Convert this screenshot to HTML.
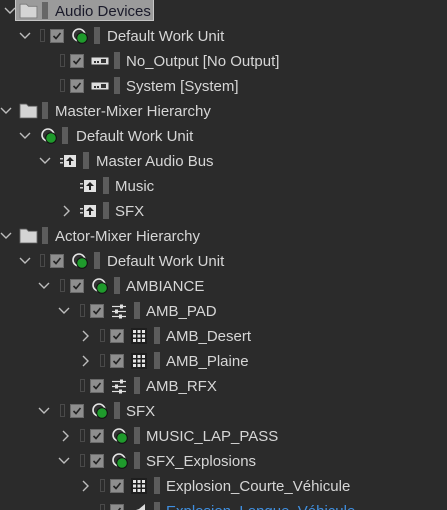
<!DOCTYPE html>
<html style="height:510px;overflow:hidden"><head><meta charset="utf-8"><style>
body{margin:0;width:447px;height:510px;background:#2b2b2b;overflow:hidden;position:relative;font-family:"Liberation Sans",sans-serif;font-size:15px;color:#d6d6d6}
.r{position:absolute;left:0;width:447px;height:25px}
.r>*{position:absolute}
.t{top:5px;line-height:18px;white-space:nowrap}
.bar{top:4px;width:6px;height:17px;background:#5c5c5c}
.grip{top:6px;width:3px;height:11px;border:1px solid #4a4a4a}
.cb{top:6px;width:12px;height:12px;background:#8e8e8e;border:1px solid #6a6a6a}
svg{position:absolute}
</style></head><body>
<svg width="0" height="0" style="position:absolute"><defs>
<symbol id="dn" viewBox="0 0 12 8"><polyline points="1,1 6,6 11,1" fill="none" stroke="#bdbdbd" stroke-width="1.4"/></symbol>
<symbol id="rt" viewBox="0 0 8 12"><polyline points="1,1 6,6 1,11" fill="none" stroke="#bdbdbd" stroke-width="1.4"/></symbol>
<symbol id="ck" viewBox="0 0 12 12"><polyline points="2.5,6 5,8.5 9.5,3" fill="none" stroke="#222" stroke-width="1.6"/></symbol>
<symbol id="fold" viewBox="0 0 18 16"><path d="M1 2h6l2 2h8v11H1z" fill="#d4d4d4" stroke="#777" stroke-width=".8"/></symbol>
<symbol id="wu" viewBox="0 0 16 16"><circle cx="7" cy="7" r="6" fill="#333" stroke="#e4e4e4" stroke-width="1.6"/><circle cx="10" cy="10" r="5.3" fill="#1f9a2c" stroke="#111" stroke-width="1"/></symbol>
<symbol id="dev" viewBox="0 0 18 10"><rect x="0.5" y="1.5" width="17" height="7" fill="#ddd"/><rect x="3" y="5" width="2" height="2" fill="#333"/><rect x="6" y="5" width="2" height="2" fill="#333"/><rect x="10" y="3" width="5" height="4" fill="#333"/></symbol>
<symbol id="bus" viewBox="0 0 18 16"><rect x="5" y="2" width="12" height="12" fill="#e2e2e2"/><path d="M11 4l-4 4h3v4h2V8h3z" fill="#222"/><rect x="1" y="5" width="3" height="1.5" fill="#ccc"/><rect x="1" y="9" width="3" height="1.5" fill="#ccc"/></symbol>
<symbol id="sl" viewBox="0 0 16 16"><g stroke="#e0e0e0" stroke-width="1.2"><line x1="1" y1="3.5" x2="15" y2="3.5"/><line x1="1" y1="8.5" x2="15" y2="8.5"/><line x1="1" y1="13.5" x2="15" y2="13.5"/></g><rect x="9" y="1.5" width="3" height="4" fill="#e0e0e0"/><rect x="4" y="6.5" width="3" height="4" fill="#e0e0e0"/><rect x="8" y="11.5" width="3" height="4" fill="#e0e0e0"/></symbol>
<symbol id="grid" viewBox="0 0 16 16"><rect width="16" height="16" fill="#1e1e1e"/><g fill="#e4e4e4"><rect x="2" y="2" width="3" height="3"/><rect x="6.5" y="2" width="3" height="3"/><rect x="11" y="2" width="3" height="3"/><rect x="2" y="6.5" width="3" height="3"/><rect x="6.5" y="6.5" width="3" height="3"/><rect x="11" y="6.5" width="3" height="3"/><rect x="2" y="11" width="3" height="3"/><rect x="6.5" y="11" width="3" height="3"/><rect x="11" y="11" width="3" height="3"/></g></symbol>
</defs></svg>

<div class="r" style="top:-2px">
<div style="left:15px;top:1px;width:139px;height:22px;background:#9b9b9b;border:1px solid #c6c6c6;box-sizing:border-box"></div>
<svg style="left:4px;top:9px" width="12" height="8"><use href="#dn"/></svg>
<svg style="left:19px;top:4px" width="19" height="17"><use href="#fold"/></svg>
<div class="bar" style="left:42px;background:#666"></div>
<div class="t" style="left:55px;color:#1a1a2a">Audio Devices</div></div>

<div class="r" style="top:23px">
<svg style="left:19px;top:9px" width="12" height="8"><use href="#dn"/></svg>
<div class="grip" style="left:40px"></div><div class="cb" style="left:50px"><svg width="12" height="12"><use href="#ck"/></svg></div>
<svg style="left:72px;top:5px" width="16" height="16"><use href="#wu"/></svg>
<div class="bar" style="left:94px"></div><div class="t" style="left:107px">Default Work Unit</div></div>

<div class="r" style="top:48px">
<div class="grip" style="left:60px"></div><div class="cb" style="left:70px"><svg width="12" height="12"><use href="#ck"/></svg></div>
<svg style="left:91px;top:8px" width="18" height="10"><use href="#dev"/></svg>
<div class="bar" style="left:114px"></div><div class="t" style="left:126px">No_Output [No Output]</div></div>

<div class="r" style="top:73px">
<div class="grip" style="left:60px"></div><div class="cb" style="left:70px"><svg width="12" height="12"><use href="#ck"/></svg></div>
<svg style="left:91px;top:8px" width="18" height="10"><use href="#dev"/></svg>
<div class="bar" style="left:114px"></div><div class="t" style="left:126px">System [System]</div></div>

<div class="r" style="top:98px">
<svg style="left:0px;top:9px" width="12" height="8"><use href="#dn"/></svg>
<svg style="left:19px;top:4px" width="19" height="17"><use href="#fold"/></svg>
<div class="bar" style="left:42px"></div><div class="t" style="left:55px">Master-Mixer Hierarchy</div></div>

<div class="r" style="top:123px">
<svg style="left:19px;top:9px" width="12" height="8"><use href="#dn"/></svg>
<svg style="left:41px;top:5px" width="16" height="16"><use href="#wu"/></svg>
<div class="bar" style="left:62px"></div><div class="t" style="left:76px">Default Work Unit</div></div>

<div class="r" style="top:148px">
<svg style="left:39px;top:9px" width="12" height="8"><use href="#dn"/></svg>
<svg style="left:59px;top:5px" width="18" height="16"><use href="#bus"/></svg>
<div class="bar" style="left:83px"></div><div class="t" style="left:96px">Master Audio Bus</div></div>

<div class="r" style="top:173px">
<svg style="left:79px;top:5px" width="18" height="16"><use href="#bus"/></svg>
<div class="bar" style="left:103px"></div><div class="t" style="left:115px">Music</div></div>

<div class="r" style="top:198px">
<svg style="left:63px;top:7px" width="8" height="12"><use href="#rt"/></svg>
<svg style="left:79px;top:5px" width="18" height="16"><use href="#bus"/></svg>
<div class="bar" style="left:103px"></div><div class="t" style="left:115px">SFX</div></div>

<div class="r" style="top:223px">
<svg style="left:0px;top:9px" width="12" height="8"><use href="#dn"/></svg>
<svg style="left:19px;top:4px" width="19" height="17"><use href="#fold"/></svg>
<div class="bar" style="left:42px"></div><div class="t" style="left:55px">Actor-Mixer Hierarchy</div></div>

<div class="r" style="top:248px">
<svg style="left:19px;top:9px" width="12" height="8"><use href="#dn"/></svg>
<div class="grip" style="left:40px"></div><div class="cb" style="left:50px"><svg width="12" height="12"><use href="#ck"/></svg></div>
<svg style="left:72px;top:5px" width="16" height="16"><use href="#wu"/></svg>
<div class="bar" style="left:94px"></div><div class="t" style="left:107px">Default Work Unit</div></div>

<div class="r" style="top:273px">
<svg style="left:38px;top:9px" width="12" height="8"><use href="#dn"/></svg>
<div class="grip" style="left:60px"></div><div class="cb" style="left:70px"><svg width="12" height="12"><use href="#ck"/></svg></div>
<svg style="left:92px;top:5px" width="16" height="16"><use href="#wu"/></svg>
<div class="bar" style="left:114px"></div><div class="t" style="left:126px">AMBIANCE</div></div>

<div class="r" style="top:298px">
<svg style="left:58px;top:9px" width="12" height="8"><use href="#dn"/></svg>
<div class="grip" style="left:80px"></div><div class="cb" style="left:90px"><svg width="12" height="12"><use href="#ck"/></svg></div>
<svg style="left:111px;top:5px" width="16" height="16"><use href="#sl"/></svg>
<div class="bar" style="left:134px"></div><div class="t" style="left:146px">AMB_PAD</div></div>

<div class="r" style="top:323px">
<svg style="left:82px;top:7px" width="8" height="12"><use href="#rt"/></svg>
<div class="grip" style="left:100px"></div><div class="cb" style="left:110px"><svg width="12" height="12"><use href="#ck"/></svg></div>
<svg style="left:131px;top:5px" width="16" height="16"><use href="#grid"/></svg>
<div class="bar" style="left:154px"></div><div class="t" style="left:166px">AMB_Desert</div></div>

<div class="r" style="top:348px">
<svg style="left:82px;top:7px" width="8" height="12"><use href="#rt"/></svg>
<div class="grip" style="left:100px"></div><div class="cb" style="left:110px"><svg width="12" height="12"><use href="#ck"/></svg></div>
<svg style="left:131px;top:5px" width="16" height="16"><use href="#grid"/></svg>
<div class="bar" style="left:154px"></div><div class="t" style="left:166px">AMB_Plaine</div></div>

<div class="r" style="top:373px">
<div class="grip" style="left:80px"></div><div class="cb" style="left:90px"><svg width="12" height="12"><use href="#ck"/></svg></div>
<svg style="left:111px;top:5px" width="16" height="16"><use href="#sl"/></svg>
<div class="bar" style="left:134px"></div><div class="t" style="left:146px">AMB_RFX</div></div>

<div class="r" style="top:398px">
<svg style="left:38px;top:9px" width="12" height="8"><use href="#dn"/></svg>
<div class="grip" style="left:60px"></div><div class="cb" style="left:70px"><svg width="12" height="12"><use href="#ck"/></svg></div>
<svg style="left:92px;top:5px" width="16" height="16"><use href="#wu"/></svg>
<div class="bar" style="left:114px"></div><div class="t" style="left:126px">SFX</div></div>

<div class="r" style="top:423px">
<svg style="left:62px;top:7px" width="8" height="12"><use href="#rt"/></svg>
<div class="grip" style="left:80px"></div><div class="cb" style="left:90px"><svg width="12" height="12"><use href="#ck"/></svg></div>
<svg style="left:112px;top:5px" width="16" height="16"><use href="#wu"/></svg>
<div class="bar" style="left:134px"></div><div class="t" style="left:146px">MUSIC_LAP_PASS</div></div>

<div class="r" style="top:448px">
<svg style="left:58px;top:9px" width="12" height="8"><use href="#dn"/></svg>
<div class="grip" style="left:80px"></div><div class="cb" style="left:90px"><svg width="12" height="12"><use href="#ck"/></svg></div>
<svg style="left:112px;top:5px" width="16" height="16"><use href="#wu"/></svg>
<div class="bar" style="left:134px"></div><div class="t" style="left:146px">SFX_Explosions</div></div>

<div class="r" style="top:473px">
<svg style="left:82px;top:7px" width="8" height="12"><use href="#rt"/></svg>
<div class="grip" style="left:100px"></div><div class="cb" style="left:110px"><svg width="12" height="12"><use href="#ck"/></svg></div>
<svg style="left:131px;top:5px" width="16" height="16"><use href="#grid"/></svg>
<div class="bar" style="left:154px"></div><div class="t" style="left:166px">Explosion_Courte_Véhicule</div></div>

<div class="r" style="top:498px;height:12px;overflow:hidden">
<div class="grip" style="left:100px"></div><div class="cb" style="left:110px"><svg width="12" height="12"><use href="#ck"/></svg></div>
<svg style="left:131px;top:5px" width="16" height="16"><path d="M2 8l6-2 6-5v14z" fill="#ddd"/></svg>
<div class="bar" style="left:154px"></div><div class="t" style="left:166px;color:#3f8fe0">Explosion_Longue_Véhicule</div></div>
</body></html>
